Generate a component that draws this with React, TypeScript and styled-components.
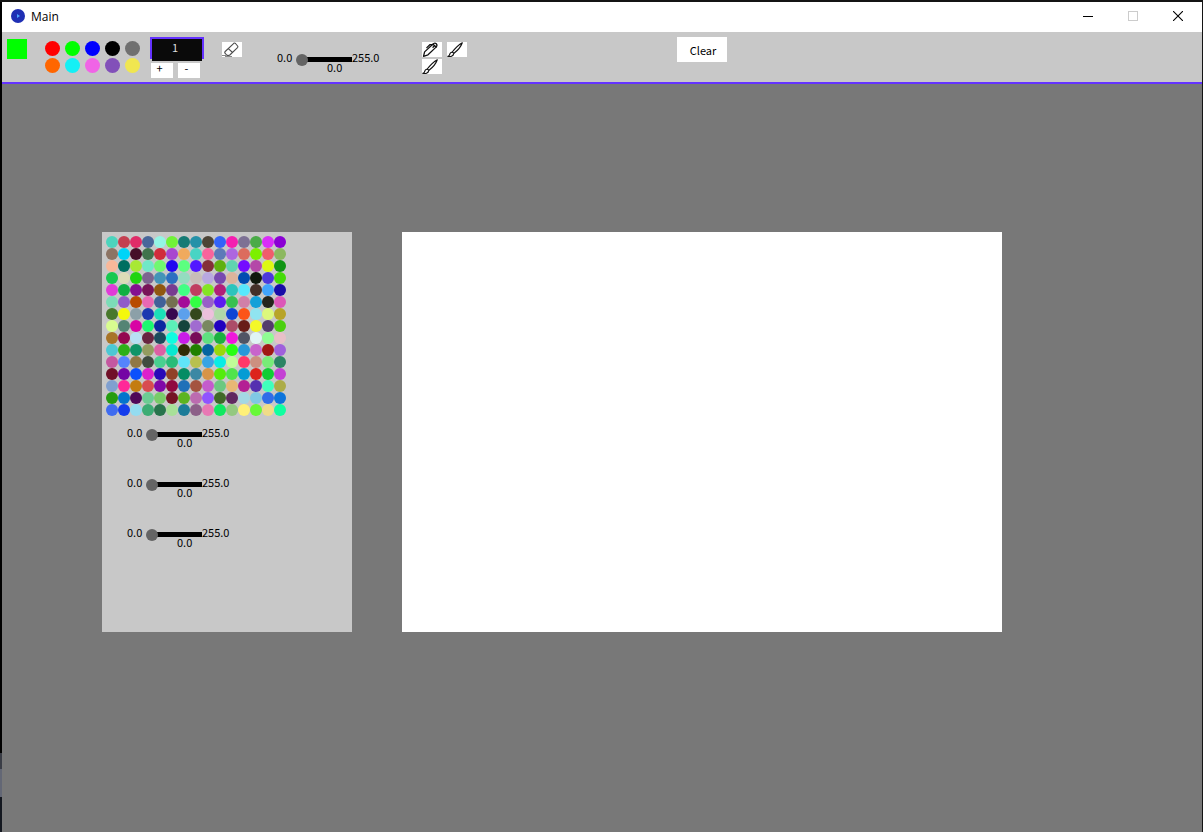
import React, { useState } from "react";
import styled, { createGlobalStyle } from "styled-components";

const GlobalStyle = createGlobalStyle`
  * { box-sizing: border-box; }
  html, body { margin: 0; background: #787878; }
  body { font-family: "Noto Sans CJK JP", "Noto Sans", sans-serif; font-size: 11px; color: #000; }
  button, input { font: inherit; color: inherit; border: 0; padding: 0; margin: 0; border-radius: 0; }
`;

const Desktop = styled.div`
  min-height: 100vh;
  display: flex;
  flex-direction: column;
  border: solid #141414;
  border-width: 2px 1px 0 0;
  padding-left: 2px;
  background:
    linear-gradient(#000 751px, #3a3d46 751px, #3a3d46 767px, #636775 767px, #636775 795px, #141820 795px)
    0 0 / 2px 100% no-repeat;
`;

const TitleBar = styled.header`
  display: flex;
  align-items: center;
  height: 30px;
  padding: 0 2px 2px 9px;
  background: #fff;
`;

const Title = styled.h1`
  flex: 1;
  margin: 2px 0 0 6px;
  font: 400 12px/16px "Open Sans", sans-serif;
`;

const WindowButton = styled.button`
  width: 45px;
  height: 28px;
  display: grid;
  place-items: center;
  background: none;
`;

const Toolbar = styled.div`
  display: flex;
  align-items: flex-start;
  height: 52px;
  padding: 5px;
  background: #c8c8c8;
  border-bottom: 2px solid #6432ff;
`;

const CurrentColor = styled.div`
  width: 20px;
  height: 20px;
  margin: 2px 18px 0 0;
  background: #0f0;
`;

const Palette = styled.div`
  display: grid;
  grid-template-columns: repeat(5, 15px);
  gap: 2px 5px;
  margin: 4px 10px 0 0;
`;

const Swatch = styled.button<{ $color: string; $size: number }>`
  width: ${(p) => p.$size}px;
  height: ${(p) => p.$size}px;
  border-radius: 50%;
  background: ${(p) => p.$color};
`;

const Stepper = styled.div`
  width: 54px;
  margin-right: 18px;
`;

const SizeInput = styled.input`
  display: block;
  width: 54px;
  height: 24px;
  padding: 0 6px 4px 2px;
  text-align: center;
  color: #ddd;
  background:
    linear-gradient(#0a0a0a, #0a0a0a) 2px 2px / 50px 22px no-repeat,
    linear-gradient(#6432ff, #6432ff) 0 0 / 54px 22px no-repeat;
  outline: 0;
`;

const StepRow = styled.div`
  display: flex;
  gap: 5px;
  padding: 2px 1px 0;
`;

const StepButton = styled.button`
  width: 22px;
  height: 15px;
  padding: 0 5px 4px 0;
  line-height: 11px;
  background: #fff;
`;

const ToolButton = styled.button`
  width: 20px;
  height: 15px;
  background: #fff;
  svg { display: block; }
`;

const EraserSlot = styled.div`
  margin: 5px 35px 0 0;
`;

const BrushGrid = styled.div`
  display: grid;
  grid-template-columns: 20px 20px;
  gap: 2px 5px;
  margin: 5px 210px 0 0;
`;

const ClearButton = styled.button`
  width: 50px;
  height: 25px;
  padding: 2px 0 0 2px;
  line-height: 23px;
  background: #fff;
`;

const SliderBox = styled.label`
  display: grid;
  grid-template-columns: 19px 56px 30px;
  grid-template-rows: 10px 10px;
  line-height: 10px;
  width: 105px;
`;

const ToolbarSlider = styled.div`
  margin: 15px 40px 0 0;
`;

const Range = styled.input`
  appearance: none;
  width: 56px;
  height: 12px;
  margin-top: 2px;
  background: linear-gradient(#000, #000) 6px 3px / 50px 5px no-repeat;
  &::-webkit-slider-thumb {
    appearance: none;
    width: 12px;
    height: 12px;
    border-radius: 50%;
    background: #646464;
  }
`;

const SliderValue = styled.output`
  grid-column: 2;
  padding-left: 31px;
`;

const Workspace = styled.main`
  flex: 1;
  display: flex;
  align-items: flex-start;
  gap: 50px;
  padding: 148px 100px 40px;
  background: #787878;
`;

const ColorPanel = styled.aside`
  flex: none;
  width: 250px;
  min-height: 400px;
  padding: 4px;
  background: #c8c8c8;
`;

const SwatchGrid = styled.div`
  display: grid;
  grid-template-columns: repeat(15, 12px);
  grid-auto-rows: 12px;
`;

const SliderStack = styled.div`
  display: flex;
  flex-direction: column;
  gap: 30px;
  padding: 11px 0 0 21px;
`;

const Canvas = styled.div`
  flex: 0 1 600px;
  height: 400px;
  background: #fff;
`;

const presets = ["#ff0000", "#00ff00", "#0000ff", "#000000", "#707070", "#ff6600", "#14f0f5", "#f064e6", "#8250b9", "#f0e650"];

const swatchRows = `
4dd4bd c43f50 e02c68 48679a 94f5e4 70f238 157a74 2491a8 4d4436 3363f8 f51eb0 7d7194 4bab48 d92df8 8a00d4
8c7464 00d4f8 450f28 40734c d02c3c a845d0 f0aa5e 48d4c4 f8649c 5d7ab8 ad66e0 dc6c5e 7cf000 f05c6c 8cb860
f8b89a 006e60 a8e834 70e8c8 70f870 2008f0 5cff80 5218ff 843038 60b010 60d4b0 740cff b448a8 dcf814 109414
18c850 dcdcb8 20d410 7c6490 4494b8 2c70c0 94dcc0 c8bcb8 b8a8e0 7848b0 dcb49c 004cb0 10180c 4c38dc 44dc08
e03cd8 10b044 841090 781458 905810 783c90 40ff84 c03c60 84e424 b02078 2cc4bc 58e8fc 443028 40a4fc 180ca8
7cdcb8 905cc8 b84c00 e868b4 406098 747050 a40c98 34ff44 9860c8 5c1cf0 38c050 d080a8 14a0d8 24241c dc58b8
48782c f4f80c 8ca0a8 1c38b0 1ce0b8 380850 5ca0ec 34481c ecc0dc b0d8a8 1044d4 fc5418 90e4f0 dcf87c b8a428
d8fc90 548474 d804a4 1cf870 0c28a0 5cf0b8 14443c a06cd0 788860 2000c0 ac4c68 681c18 f4f828 543c6c 4cd010
a87428 940850 b8e0f4 682440 1c4c5c 10fce0 c81ce8 780c58 60e080 1cb040 f018dc 505464 e0f4f4 90fc94 e8c0c8
4cc8d4 2cb018 109468 949c60 dc60a4 08e8d0 302c04 208000 0464a0 98d80c 28ff14 2898d8 c864cc a01814 a060dc
c458a0 5484fc 907844 404c40 48d090 28bc78 60e4f8 b8c050 38a4e4 08ece4 c0fc98 ff3868 cc9080 78ec78 2c8464
701028 7404a4 0c50fc dc20cc 2808b8 904028 048c64 3c88a4 d89448 54ec0c 50e44c 049cd4 dc241c 10cc34 c440d4
80a0d0 ff2898 c47c10 d84c50 8008a8 900840 2070b8 a45440 c45ccc 6cc880 e8b874 b42094 5430b0 40ffbc acac48
249c10 0474cc 500858 6ccc94 78cc68 741424 5cb420 bc6cb0 9054ff 406828 602860 a4d8e4 80c8e4 306ce8 0c74dc
406cf0 143cec 94dcf0 3cac74 28744c a8e098 1c7c98 8c6088 e878b4 10e860 94c880 fff078 68f838 f0dc88 10ffa0
`;
const swatches = swatchRows.trim().split(/\s+/).map((c) => "#" + c);

function Slider({ name }: { name: string }) {
  const [value, setValue] = useState(0);
  return (
    <SliderBox>
      <span>0.0</span>
      <Range type="range" min={0} max={255} value={value} aria-label={name} onChange={(e) => setValue(Number(e.target.value))} />
      <span>255.0</span>
      <SliderValue>{value.toFixed(1)}</SliderValue>
    </SliderBox>
  );
}

function BrushIcon() {
  return (
    <svg width="20" height="15" viewBox="0 0 20 15" fill="none" stroke="#111" strokeWidth="1.1" strokeLinecap="round" strokeLinejoin="round">
      <path d="M15.300 .7 C12 2.500 8 6.500 5.200 10 L7 11.300 C10.500 8.500 14 4.500 15.300 .7 Z" />
      <path d="M5 10.200 C3.200 10.200 2.800 11.700 2.500 13 C2 14 1.400 14.300 .8 14.400 C3 15 6.400 14.300 6.700 11.600" />
    </svg>
  );
}

function PencilIcon() {
  return (
    <svg width="20" height="15" viewBox="0 0 20 15" fill="none" stroke="#111" strokeWidth="1.300" strokeLinecap="round" strokeLinejoin="round">
      <path d="M1.500 14.300 L2.600 9.900 L10.500 2.500 Q12.500 .4 14.300 1.700 Q15.800 3.300 13.800 5.400 L6 12.800 Z" />
      <path d="M11 2.300 L14.200 5 M12.200 4 L11 5.200" />
      <path d="M10.500 2.700 H7.800 L4.800 5.600" />
    </svg>
  );
}

function EraserIcon() {
  return (
    <svg width="20" height="15" viewBox="0 0 20 15" fill="none" stroke="#4c4c4c" strokeWidth="1.100" strokeLinejoin="round">
      <path d="M3.200 9.500 L11.800 1.300 Q12.700 .7 13.500 1.500 L15.600 4 Q16.200 4.800 15.500 5.600 L7.800 13 Q6 14.200 4.600 13 L3 11.200 Q2.400 10.300 3.200 9.500 Z" />
      <path d="M6.300 6.600 L10.600 10.500" />
      <path d="M0 13.500 H4 M3 14.500 H10" stroke="#888" />
    </svg>
  );
}

export default function App() {
  const [size, setSize] = useState(1);
  return (
    <>
      <GlobalStyle />
      <Desktop>
        <TitleBar>
          <svg width="14" height="14" viewBox="0 0 14 14" aria-hidden="true">
            <circle cx="7" cy="7" r="7" fill="#1f2fb4" />
            <path d="M6 5 L9 7 L6 9 Z" fill="#4da3ff" />
          </svg>
          <Title>Main</Title>
          <WindowButton aria-label="Minimize">
            <svg width="10" height="10"><path d="M0 5.500H10" stroke="#000" /></svg>
          </WindowButton>
          <WindowButton aria-label="Maximize" disabled>
            <svg width="10" height="10"><rect x=".5" y=".5" width="9" height="9" fill="none" stroke="#ccc" /></svg>
          </WindowButton>
          <WindowButton aria-label="Close">
            <svg width="10" height="10"><path d="M0 0L10 10M10 0L0 10" stroke="#000" strokeWidth="1.100" /></svg>
          </WindowButton>
        </TitleBar>
        <Toolbar>
          <CurrentColor />
          <Palette>
            {presets.map((c) => <Swatch key={c} $color={c} $size={15} aria-label={c} />)}
          </Palette>
          <Stepper>
            <SizeInput aria-label="Brush size" value={size} onChange={(e) => setSize(Number(e.target.value) || 1)} />
            <StepRow>
              <StepButton onClick={() => setSize(size + 1)}>+</StepButton>
              <StepButton onClick={() => setSize(Math.max(1, size - 1))}>-</StepButton>
            </StepRow>
          </Stepper>
          <EraserSlot>
            <ToolButton aria-label="Eraser"><EraserIcon /></ToolButton>
          </EraserSlot>
          <ToolbarSlider><Slider name="Opacity" /></ToolbarSlider>
          <BrushGrid>
            <ToolButton aria-label="Pencil"><PencilIcon /></ToolButton>
            <ToolButton aria-label="Brush"><BrushIcon /></ToolButton>
            <ToolButton aria-label="Paint brush"><BrushIcon /></ToolButton>
          </BrushGrid>
          <ClearButton>Clear</ClearButton>
        </Toolbar>
        <Workspace>
          <ColorPanel>
            <SwatchGrid>
              {swatches.map((c, i) => <Swatch key={i} $color={c} $size={12} aria-label={c} />)}
            </SwatchGrid>
            <SliderStack>
              <Slider name="Red" />
              <Slider name="Green" />
              <Slider name="Blue" />
            </SliderStack>
          </ColorPanel>
          <Canvas />
        </Workspace>
      </Desktop>
    </>
  );
}
